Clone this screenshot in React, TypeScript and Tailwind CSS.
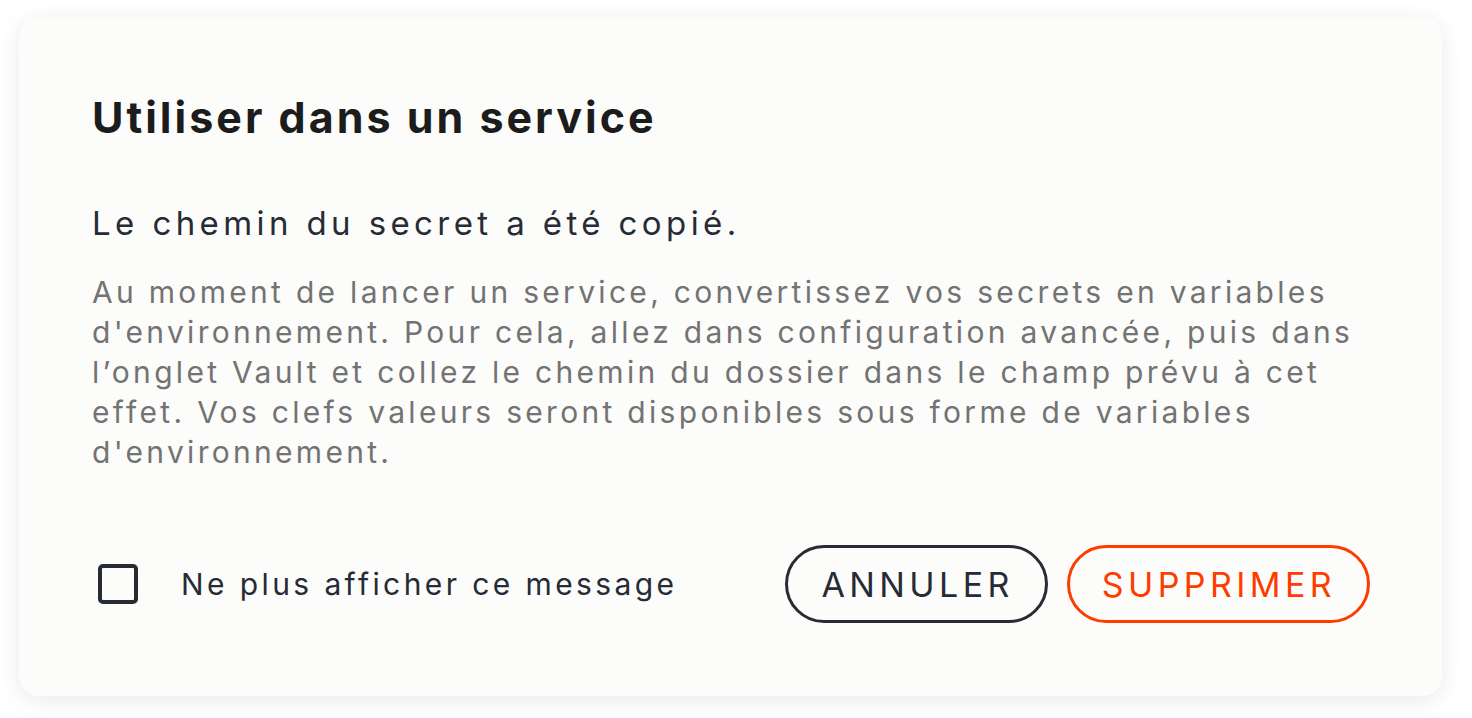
import React, { useState } from "react";

export default function App() {
  const [hide, setHide] = useState(false);

  return (
    <div className="min-h-screen bg-white pl-[19px] pt-[17px] font-['Inter',sans-serif]">
      <div className="flex h-[679px] w-[1423px] flex-col rounded-[20px] bg-[#fcfcfa] pl-[73px] pr-[72px] pt-[74px] shadow-[0_4px_22px_rgba(0,0,0,0.09)]">
        {/* Header */}
        <h2 className="text-[43px] font-bold leading-[52px] tracking-[3px] text-[#1c1c1c]">
          Utiliser dans un service
        </h2>

        {/* Body */}
        <p className="mt-[60px] text-[33px] leading-[40px] tracking-[4.4px] text-[#262b36]">
          Le chemin du secret a été copié.
        </p>
        <p className="mt-[29px] text-[30px] leading-[40px] tracking-[3.3px] text-[#737373]">
          Au moment de lancer un service, convertissez vos secrets en variables d'environnement. Pour
          cela, allez dans configuration avancée, puis dans l’onglet Vault et collez le chemin du
          dossier dans le champ prévu à cet effet. Vos clefs valeurs seront disponibles sous forme de
          variables d'environnement.
        </p>

        {/* Footer */}
        <div className="mt-[73px] flex items-center justify-between">
          <label className="flex cursor-pointer items-center gap-[43px]">
            <input
              type="checkbox"
              checked={hide}
              onChange={(e) => setHide(e.target.checked)}
              className="sr-only"
            />
            <span className="ml-[6px] flex h-[40px] w-[40px] items-center justify-center rounded-[5px] border-[4px] border-[#262b36]">
              {hide && (
                <svg viewBox="0 0 24 24" className="h-[26px] w-[26px]" fill="none" stroke="#262b36" strokeWidth="3.5" strokeLinecap="round" strokeLinejoin="round">
                  <path d="M5 12.5l4.5 4.5L19 7" />
                </svg>
              )}
            </span>
            <span className="text-[30px] leading-[40px] tracking-[3.4px] text-[#262b36]">
              Ne plus afficher ce message
            </span>
          </label>

          <div className="flex items-center gap-[19px]">
            <button className="h-[78px] rounded-full border-[3px] border-[#262b36] pl-[33px] pr-[31px] text-[34px] tracking-[4.4px] text-[#262b36]">
              ANNULER
            </button>
            <button className="h-[78px] rounded-full border-[3px] border-[#ff3c00] pl-[32px] pr-[31px] text-[34px] tracking-[4.4px] text-[#ff3c00]">
              SUPPRIMER
            </button>
          </div>
        </div>
      </div>
    </div>
  );
}
